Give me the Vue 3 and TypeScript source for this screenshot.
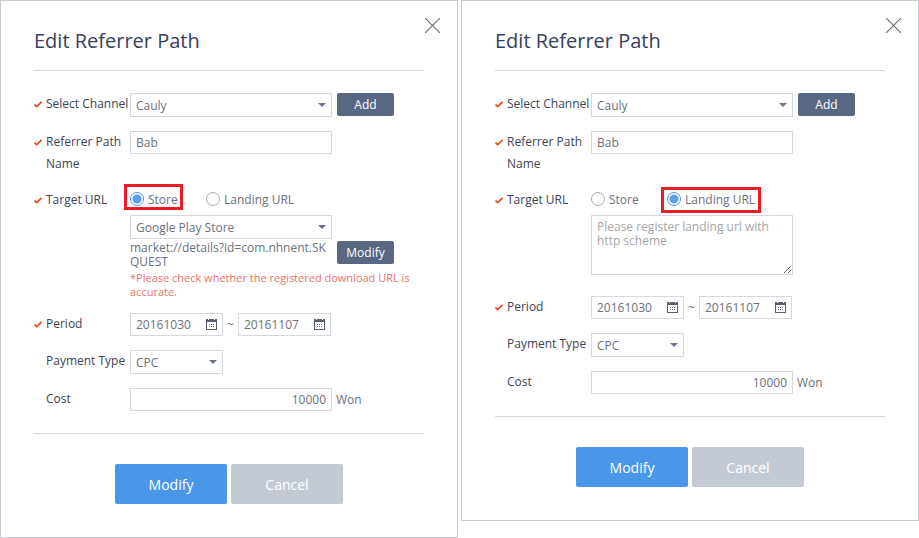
<script setup lang="ts">
import { reactive } from 'vue'

interface ReferrerForm {
  id: string
  channel: string
  pathName: string
  target: 'store' | 'landing'
  store: string
  landingUrl: string
  from: string
  to: string
  payment: string
  cost: string
}

const base = {
  channel: 'Cauly',
  pathName: 'Bab',
  store: 'Google Play Store',
  landingUrl: '',
  from: '20161030',
  to: '20161107',
  payment: 'CPC',
  cost: '10000',
}

const forms = reactive<ReferrerForm[]>([
  { id: 'store', target: 'store', ...base },
  { id: 'landing', target: 'landing', ...base },
])
</script>

<template>
  <main class="dialogs">
    <form v-for="f in forms" :key="f.id" class="dialog" @submit.prevent>
      <header class="head">
        <h1>Edit Referrer Path</h1>
        <button type="button" class="close" aria-label="Close">
          <svg width="15" height="15" viewBox="0 0 15 15"><path d="M0 0L15 15M15 0L0 15" stroke="#6b6f78" stroke-width="1.2" /></svg>
        </button>
      </header>

      <div class="fields">
        <div class="row">
          <label class="name required" :for="f.id + '-channel'">
            <svg class="tick" width="8" height="7" viewBox="0 0 8 7"><path d="M0.5 3.5L2.7 5.7L7.5 0.8" /></svg>
            <span>Select Channel</span>
          </label>
          <div class="line">
            <span class="pick wide">
              <select :id="f.id + '-channel'" v-model="f.channel"><option>Cauly</option></select>
              <svg class="arrow" width="8" height="4" viewBox="0 0 8 4"><path d="M0 0H8L4 4Z" /></svg>
            </span>
            <button type="button" class="small">Add</button>
          </div>
        </div>

        <div class="row">
          <label class="name required two-line" :for="f.id + '-path'">
            <svg class="tick" width="8" height="7" viewBox="0 0 8 7"><path d="M0.5 3.5L2.7 5.7L7.5 0.8" /></svg>
            <span>Referrer Path Name</span>
          </label>
          <input :id="f.id + '-path'" v-model="f.pathName" class="box wide" type="text" />
        </div>

        <div class="row">
          <span :id="f.id + '-target'" class="name required">
            <svg class="tick" width="8" height="7" viewBox="0 0 8 7"><path d="M0.5 3.5L2.7 5.7L7.5 0.8" /></svg>
            <span>Target URL</span>
          </span>
          <div>
            <div class="radios" role="radiogroup" :aria-labelledby="f.id + '-target'">
              <label :class="{ marked: f.target === 'store' }">
                <input v-model="f.target" type="radio" :name="f.id + '-kind'" value="store" />Store
              </label>
              <label class="second" :class="{ marked: f.target === 'landing' }">
                <input v-model="f.target" type="radio" :name="f.id + '-kind'" value="landing" />Landing URL
              </label>
            </div>
            <template v-if="f.target === 'store'">
              <span class="pick wide">
                <select v-model="f.store" aria-label="Store"><option>Google Play Store</option></select>
                <svg class="arrow" width="8" height="4" viewBox="0 0 8 4"><path d="M0 0H8L4 4Z" /></svg>
              </span>
              <div class="line url">
                <p>market://details?id=com.nhnent.SKQUEST</p>
                <button type="button" class="small">Modify</button>
              </div>
              <p class="warn">*Please check whether the registered download URL is accurate.</p>
            </template>
            <textarea
              v-else
              v-model="f.landingUrl"
              class="wide"
              aria-label="Landing URL"
              placeholder="Please register landing url with http scheme"
            ></textarea>
          </div>
        </div>

        <div class="row">
          <label class="name required" :for="f.id + '-from'">
            <svg class="tick" width="8" height="7" viewBox="0 0 8 7"><path d="M0.5 3.5L2.7 5.7L7.5 0.8" /></svg>
            <span>Period</span>
          </label>
          <div class="period">
            <span class="date">
              <input :id="f.id + '-from'" v-model="f.from" type="text" />
              <button type="button" aria-label="Choose start date">
                <svg width="11" height="11" viewBox="0 0 11 11" fill="#566070" shape-rendering="crispEdges">
                  <path fill-rule="evenodd" d="M0 0H2V1H3V0H8V1H9V0H11V11H0ZM1 3V10H10V3Z" />
                  <path d="M3 5h1v1h-1zM5 5h1v1h-1zM7 5h1v1h-1zM3 7h1v1h-1zM5 7h1v1h-1zM7 7h1v1h-1z" />
                </svg>
              </button>
            </span>
            <span class="tilde">~</span>
            <span class="date">
              <input v-model="f.to" type="text" aria-label="End date" />
              <button type="button" aria-label="Choose end date">
                <svg width="11" height="11" viewBox="0 0 11 11" fill="#566070" shape-rendering="crispEdges">
                  <path fill-rule="evenodd" d="M0 0H2V1H3V0H8V1H9V0H11V11H0ZM1 3V10H10V3Z" />
                  <path d="M3 5h1v1h-1zM5 5h1v1h-1zM7 5h1v1h-1zM3 7h1v1h-1zM5 7h1v1h-1zM7 7h1v1h-1z" />
                </svg>
              </button>
            </span>
          </div>
        </div>

        <div class="row">
          <label class="name" :for="f.id + '-payment'"><span>Payment Type</span></label>
          <span class="pick narrow">
            <select :id="f.id + '-payment'" v-model="f.payment"><option>CPC</option></select>
            <svg class="arrow" width="8" height="4" viewBox="0 0 8 4"><path d="M0 0H8L4 4Z" /></svg>
          </span>
        </div>

        <div class="row">
          <label class="name" :for="f.id + '-cost'"><span>Cost</span></label>
          <div class="line cost">
            <input :id="f.id + '-cost'" v-model="f.cost" class="box wide" type="text" />
            <span>Won</span>
          </div>
        </div>
      </div>

      <footer class="actions">
        <button type="submit" class="primary">Modify</button>
        <button type="button" class="secondary">Cancel</button>
      </footer>
    </form>
  </main>
</template>

<style>
body {
  margin: 0;
  background: #fff;
}
</style>

<style scoped>
* {
  box-sizing: border-box;
}
.dialogs {
  display: grid;
  grid-template-columns: 1fr 1fr;
  align-items: start;
  gap: 3px;
  font-family: 'Open Sans', 'Noto Sans', sans-serif;
  font-size: 12px;
  color: #6c717c;
}
.dialog {
  position: relative;
  padding: 0 33px 33px;
  border: 1px solid #c9ccd6;
  background: #fff;
}
button,
input,
select,
textarea {
  margin: 0;
  font: inherit;
  color: inherit;
}
button {
  padding: 0;
  border: 0;
  cursor: pointer;
}
h1,
p {
  margin: 0;
}
.head {
  padding: 25px 0 14px;
  border-bottom: 1px solid #d5d8df;
}
h1 {
  font-size: 20px;
  line-height: 30px;
  font-weight: 400;
  color: #363f5f;
}
.close {
  position: absolute;
  top: 17px;
  right: 17px;
  display: flex;
  background: none;
}
.fields {
  display: flex;
  flex-direction: column;
  gap: 14px;
  padding: 22px 0;
  border-bottom: 1px solid #d5d8df;
}
.row {
  display: grid;
  grid-template-columns: 84px 1fr;
  align-items: start;
  padding-left: 12px;
}
.name {
  display: flex;
  height: 23px;
  line-height: 22px;
  color: #3c4356;
}
.two-line {
  height: 44px;
}
.required {
  gap: 4px;
  margin-left: -12px;
}
.tick {
  flex: none;
  margin-top: 8px;
  fill: none;
  stroke: #f23c0c;
  stroke-width: 1.6;
}
.line {
  display: flex;
  gap: 5px;
}
.wide {
  width: 202px;
}
.narrow {
  width: 93px;
}
.pick {
  position: relative;
  display: block;
}
.pick select {
  display: block;
  width: 100%;
  height: 24px;
  padding: 0 20px 0 5px;
  border: 1px solid #d5d8df;
  border-radius: 0;
  background: #fff;
  appearance: none;
}
.arrow {
  position: absolute;
  top: 10px;
  right: 6px;
  fill: #66738a;
  pointer-events: none;
}
.box {
  height: 23px;
  padding: 0 5px;
  border: 1px solid #d5d8df;
  border-radius: 0;
}
.small {
  width: 57px;
  height: 23px;
  border-radius: 2px;
  background: #596783;
  color: #fff;
}
.radios {
  display: flex;
  height: 20px;
  margin-bottom: 6px;
}
.radios label {
  position: relative;
  display: flex;
  align-items: center;
  gap: 4px;
}
.radios label:first-child {
  width: 47px;
}
.radios .second {
  margin-left: 29px;
}
.radios input {
  flex: none;
  width: 14px;
  height: 14px;
  border: 1px solid #aaacb2;
  border-radius: 50%;
  background: #fff;
  appearance: none;
}
.radios input:checked {
  border-color: #4a94e6;
  background: radial-gradient(circle, #5ba0ea 4px, #fff 5px);
}
.marked::after {
  content: '';
  position: absolute;
  inset: -5px -6px -1px;
  border: 3px solid #ed1c24;
  pointer-events: none;
}
.second.marked::after {
  inset: -2px -6px -4px;
}
.url {
  padding: 2px 0;
}
.url p {
  width: 202px;
  line-height: 14px;
  word-break: break-all;
}
.warn {
  font-size: 11px;
  line-height: 14px;
  color: #f0706c;
}
textarea {
  display: block;
  height: 60px;
  margin-bottom: 7px;
  padding: 4px 5px;
  border: 1px solid #d5d8df;
  border-radius: 0;
  line-height: 14px;
}
textarea::placeholder {
  color: #a5a5a8;
}
.period {
  display: flex;
  align-items: center;
}
.tilde {
  width: 15px;
  text-align: center;
}
.date {
  display: flex;
  align-items: center;
  width: 93px;
  height: 23px;
  padding: 0 5px;
  border: 1px solid #d5d8df;
}
.date input {
  flex: 1;
  min-width: 0;
  padding: 0;
  border: 0;
}
.date button {
  display: flex;
  background: none;
}
.cost {
  align-items: center;
  gap: 4px;
}
.cost .box {
  text-align: right;
}
.actions {
  display: flex;
  justify-content: center;
  gap: 4px;
  padding-top: 30px;
}
.actions button {
  width: 112px;
  height: 40px;
  border-radius: 2px;
  color: #fff;
  font-size: 14px;
  font-weight: 500;
}
.primary {
  background: #4a96e8;
}
.secondary {
  background: #c3cad4;
}
</style>
